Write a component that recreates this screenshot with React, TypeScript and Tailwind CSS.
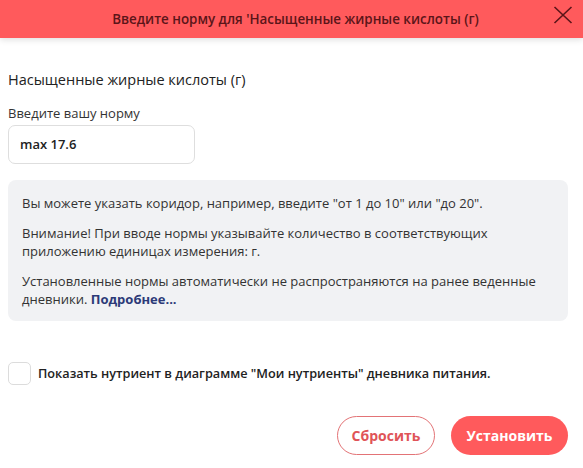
import React from "react";

export default function App() {
  return (
    <div
      className="w-[583px] h-[468px] bg-white overflow-hidden text-[#2b2b2b]"
      style={{ fontFamily: '"Open Sans", "Noto Sans", sans-serif' }}
    >
      <div className="relative h-[38px] bg-[#ff5a5c] flex items-center justify-center shadow-[0_2px_6px_rgba(0,0,0,0.12)]">
        <span className="text-[13.4px] font-semibold text-[#5b1519] pl-[8px]">
          Введите норму для 'Насыщенные жирные кислоты (г)
        </span>
        <svg
          className="absolute left-[553px] top-[6px]"
          width="20"
          height="18"
          viewBox="0 0 20 18"
          fill="none"
        >
          <path d="M1.5 1 L18.5 17 M18.5 1 L1.5 17" stroke="#5b1519" strokeWidth="1.6" />
        </svg>
      </div>

      <div className="px-[8px] pt-[32px]">
        <div className="text-[14.5px] leading-[20px] text-[#222]">
          Насыщенные жирные кислоты (г)
        </div>
        <div className="mt-[14px] text-[13px] leading-[18px] text-[#333]">
          Введите вашу норму
        </div>
        <div className="mt-[3px] w-[187px] h-[39px] border border-[#dedede] rounded-[7px] flex items-center px-[11px] text-[13px] font-semibold text-[#222]">
          max 17.6
        </div>

        <div className="mt-[16px] w-[560px] h-[141px] bg-[#f1f2f4] rounded-[8px] px-[14px] pt-[14px] text-[13px] leading-[18px] text-[#333]">
          <p>Вы можете указать коридор, например, введите "от 1 до 10" или "до 20".</p>
          <p className="mt-[12px]">
            Внимание! При вводе нормы указывайте количество в соответствующих
            <br />
            приложению единицах измерения: г.
          </p>
          <p className="mt-[12px]">
            Установленные нормы автоматически не распространяются на ранее веденные
            <br />
            дневники. <span className="font-bold text-[#2c3a78]">Подробнее...</span>
          </p>
        </div>

        <div className="mt-[41px] flex items-center gap-[7px]">
          <div className="w-[23px] h-[23px] border border-[#dcdcdc] rounded-[5px] bg-white" />
          <span className="text-[12.7px] font-semibold text-[#222]">
            Показать нутриент в диаграмме "Мои нутриенты" дневника питания.
          </span>
        </div>

        <div className="mt-[31px] flex justify-end gap-[16px] pr-[7px]">
          <button className="w-[98px] h-[39px] rounded-full border border-[#e37376] text-[#e05458] text-[14px] font-bold bg-white">
            Сбросить
          </button>
          <button className="w-[117px] h-[39px] rounded-full bg-[#ff5a5c] text-white text-[14px] font-bold">
            Установить
          </button>
        </div>
      </div>
    </div>
  );
}
